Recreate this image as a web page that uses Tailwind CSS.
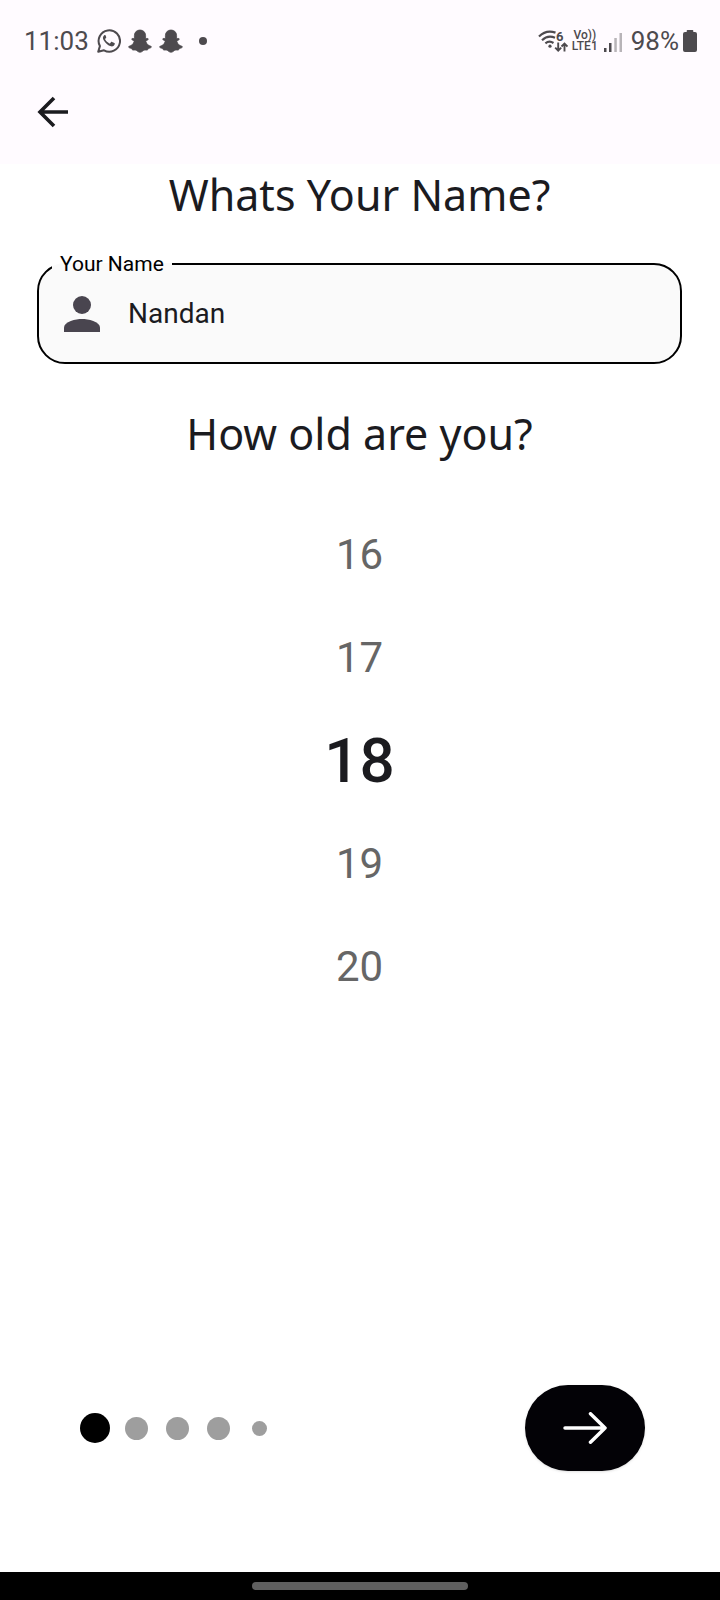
<!DOCTYPE html>
<html lang="en">
<head>
<meta charset="utf-8">
<meta name="viewport" content="width=device-width, initial-scale=1">
<title>Your profile</title>
<script src="https://cdn.jsdelivr.net/npm/@tailwindcss/browser@4"></script>
</head>
<body class="flex min-h-screen flex-col bg-white font-['Roboto',sans-serif] text-[#1b1b1f]">
  <header class="bg-[#fffbff] pb-7">
    <div class="flex items-center justify-between pt-[23px] pr-[23px] pl-6 text-[26px] leading-9 text-[#4d4a4e]">
      <div class="flex items-center">
        <time class="mr-2">11:03</time>
        <svg class="mr-[7px] size-6" viewBox="0 0 24 24" fill="none" aria-label="WhatsApp">
          <path d="M1.200 22.800l1.700-5.700A10.700 10.700 0 1 1 7 21.300z" stroke="currentColor" stroke-width="2" stroke-linejoin="round"/>
          <path d="M8.600 6.400c-.3-.6-.9-.6-1.400-.2C5.500 7.600 5.700 9.500 6.700 11.300c1.700 3 4.200 5.200 7.300 6 1.700.4 3.700-.7 3.800-2.600 0-.3-.1-.5-.4-.7l-2.300-1.100c-.4-.2-.7-.1-1 .2l-.9 1.200c-.2.2-.5.3-.8.1-1.900-.8-3.200-2-4.200-3.800-.1-.3-.1-.5.1-.8l.8-1c.2-.3.2-.5.1-.8z" fill="currentColor"/>
        </svg>
        <svg class="mr-[7px] size-6" viewBox="0 0 24 24" fill="currentColor" aria-label="Snapchat">
          <path d="M12 1c3.400 0 5.600 2.400 5.600 5.600v3c.8.1 1.600-.3 2.200-.1.7.3.6 1-.1 1.400-.7.500-2 .7-1.800 1.700.6 2.300 2.400 4 5 4.700.8.3.5 1.100-.3 1.500-1 .5-2.200.6-2.600 1-.3.500-.1 1.200-.8 1.300-1.100.1-2.400-.3-3.700.4-1 .6-1.800 1.700-3.500 1.700s-2.500-1.100-3.500-1.700c-1.300-.7-2.600-.3-3.700-.4-.7-.1-.5-.8-.8-1.300-.4-.4-1.600-.5-2.600-1-.8-.4-1.100-1.200-.3-1.500 2.600-.7 4.400-2.400 5-4.700.2-1-1.100-1.200-1.800-1.700-.7-.4-.8-1.100-.1-1.400.6-.2 1.400.2 2.200.1v-3C6.400 3.400 8.600 1 12 1z" stroke="currentColor" stroke-width=".8"/>
        </svg>
        <svg class="mr-4 size-6" viewBox="0 0 24 24" fill="currentColor" aria-label="Snapchat">
          <path d="M12 1c3.400 0 5.600 2.400 5.600 5.600v3c.8.1 1.600-.3 2.200-.1.7.3.6 1-.1 1.400-.7.500-2 .7-1.800 1.700.6 2.300 2.400 4 5 4.700.8.3.5 1.100-.3 1.500-1 .5-2.200.6-2.600 1-.3.500-.1 1.200-.8 1.300-1.100.1-2.400-.3-3.700.4-1 .6-1.800 1.700-3.500 1.700s-2.500-1.100-3.500-1.700c-1.300-.7-2.600-.3-3.700-.4-.7-.1-.5-.8-.8-1.300-.4-.4-1.600-.5-2.600-1-.8-.4-1.100-1.200-.3-1.500 2.600-.7 4.400-2.400 5-4.700.2-1-1.100-1.200-1.800-1.700-.7-.4-.8-1.100-.1-1.400.6-.2 1.400.2 2.200.1v-3C6.400 3.400 8.600 1 12 1z" stroke="currentColor" stroke-width=".8"/>
        </svg>
        <span class="size-2 rounded-full bg-current"></span>
      </div>
      <div class="flex items-center">
        <svg class="mr-1 h-6 w-[30px]" viewBox="0 0 30 24" fill="none" stroke="currentColor" stroke-width="2.200" aria-label="Wi-Fi 6">
          <path d="M1 7.500C6 2.500 12 1.600 17.500 3.600M4 11.200C8 7.400 12.500 6.800 17 8.800M7.400 14.300C10 12.200 13 12.300 15.500 14"/>
          <circle cx="12" cy="17.200" r="1.600" fill="currentColor" stroke="none"/>
          <path d="M20.200 13.500v8M17.200 18.700l3 3 3-3M26.500 22.500v-8M23.500 17.500l3-3 3 3" stroke-width="1.900"/>
          <text x="18" y="11.500" font-family="Roboto, sans-serif" font-size="13" font-weight="700" fill="currentColor" stroke="none">6</text>
        </svg>
        <span class="mr-1.5 flex flex-col items-center text-[12px] leading-[11px] font-medium"><span>Vo))</span><span>LTE1</span></span>
        <svg class="mt-0.5 mr-[9px] h-5 w-[18px]" viewBox="0 0 18 20" fill="currentColor" aria-label="Signal">
          <path d="M0 16h2.500v4H0zM5 11h2.500v9H5z"/>
          <path d="M10.300 6h2.500v14h-2.500zM15.500 1H18v19h-2.500z" opacity=".4"/>
        </svg>
        <span class="mr-1">98%</span>
        <svg class="h-[22px] w-[14px]" viewBox="0 0 14 22" fill="currentColor" aria-label="Battery">
          <path d="M4.500 0h5q.8 0 .8.800V2H12q2 0 2 2v16q0 2-2 2H2q-2 0-2-2V4q0-2 2-2h1.700V.8q0-.8.800-.8z"/>
        </svg>
      </div>
    </div>
    <button type="button" aria-label="Back" class="mt-[29px] ml-[29px] flex size-12 items-center justify-center">
      <svg class="size-8" viewBox="0 0 32 32" fill="none" stroke="#1b1b1f" stroke-width="3.600" aria-hidden="true">
        <path d="M31 16H3M17 2L3 16l14 14"/>
      </svg>
    </button>
  </header>

  <main class="flex flex-1 flex-col pr-[38px] pl-[37px]">
    <h1 class="text-center font-['Noto_Sans',sans-serif] text-[43px] leading-[62px]">Whats Your Name?</h1>
    <fieldset class="mt-[26px] h-[112px] rounded-[28px] border-2 border-black bg-[#fafafa] px-[13px]">
      <legend class="px-2 text-[21px] leading-6 text-black"><label for="name">Your Name</label></legend>
      <div class="flex h-[76px] items-center gap-7 pl-3">
        <svg class="size-9 shrink-0" viewBox="0 0 36 36" fill="#49454f" aria-hidden="true">
          <circle cx="18" cy="9" r="9"/>
          <path d="M0 36v-4.500C0 25.500 12 23 18 23s18 2.500 18 8.500V36z"/>
        </svg>
        <input id="name" type="text" value="Nandan" class="min-w-0 flex-1 bg-transparent text-[28px] leading-10 outline-none">
      </div>
    </fieldset>

    <h2 class="mt-[39px] text-center font-['Noto_Sans',sans-serif] text-[43px] leading-[62px]">How old are you?</h2>
    <div class="mt-[38px] flex flex-col items-center text-[42px] text-[#666666]" role="group" aria-label="Age">
      <button type="button" class="h-[103px] px-8">16</button>
      <button type="button" class="h-[103px] px-8">17</button>
      <button type="button" aria-pressed="true" class="h-[103px] px-8 text-[62px] font-medium text-[#1b1b1f]">18</button>
      <button type="button" class="h-[103px] px-8">19</button>
      <button type="button" class="h-[103px] px-8">20</button>
    </div>

    <div class="mt-auto mb-[101px] flex items-center justify-between pr-[37px] pl-[43px]">
      <div class="flex items-center" role="group" aria-label="Step 1 of 5">
        <span class="size-[30px] rounded-full bg-black"></span>
        <span class="ml-[15px] size-[23px] rounded-full bg-[#9e9e9e]"></span>
        <span class="ml-[18px] size-[23px] rounded-full bg-[#9e9e9e]"></span>
        <span class="ml-[18px] size-[23px] rounded-full bg-[#9e9e9e]"></span>
        <span class="ml-[22px] size-[15px] rounded-full bg-[#9e9e9e]"></span>
      </div>
      <button type="button" aria-label="Next" class="flex h-[86px] w-[120px] items-center justify-center rounded-full bg-[#030206] shadow-sm">
        <svg class="h-8 w-11" viewBox="0 0 44 32" fill="none" stroke="white" stroke-width="3.500" stroke-linecap="round" stroke-linejoin="round" aria-hidden="true">
          <path d="M2 16h40M27.500 1.800L42 16 27.500 30.200"/>
        </svg>
      </button>
    </div>
  </main>

  <footer class="flex h-7 items-center justify-center bg-black">
    <span class="h-2 w-[216px] rounded-full bg-[#5f5f5f]"></span>
  </footer>
</body>
</html>
